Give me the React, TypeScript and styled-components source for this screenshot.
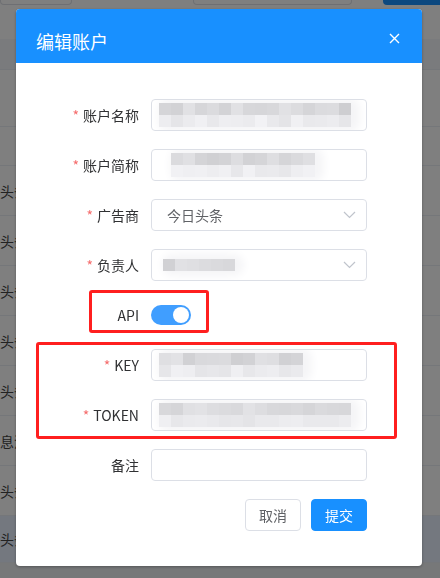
import React from "react";
import styled, { createGlobalStyle } from "styled-components";

const GlobalStyle = createGlobalStyle`
  html, body {
    margin: 0;
    padding: 0;
  }
  body {
    width: 440px;
    height: 578px;
    overflow: hidden;
    background: #fff;
    font-family: "Noto Sans CJK SC", "Microsoft YaHei", sans-serif;
  }
`;

/* ---------- page behind the dialog ---------- */

const Page = styled.div`
  width: 440px;
  height: 578px;
  overflow: hidden;
`;

const Toolbar = styled.div`
  display: flex;
  height: 5px;
`;

interface FilterBoxProps {
  $width: number;
  $gap: number;
}
const FilterBox = styled.div<FilterBoxProps>`
  width: ${(p) => p.$width}px;
  margin-left: ${(p) => p.$gap}px;
  height: 5px;
  box-sizing: border-box;
  border: 1px solid #dcdfe6;
  border-top: none;
  border-radius: 0 0 4px 4px;
`;

const ToolbarButton = styled.div`
  flex: 1;
  margin-left: 31px;
  height: 5px;
  background: #1890ff;
  border-radius: 0 0 0 4px;
`;

const Table = styled.div`
  margin-top: 34px;
  display: flex;
  flex-direction: column;
`;

interface TableRowProps {
  $height: number;
  $bg?: string;
}
const TableRow = styled.div<TableRowProps>`
  height: ${(p) => p.$height}px;
  background: ${(p) => p.$bg || "#fff"};
  border-bottom: 1px solid #ebeef5;
  box-sizing: border-box;
  display: flex;
  align-items: center;
  font-size: 14px;
  color: #444;
`;

/* ---------- dialog ---------- */

const Overlay = styled.div`
  position: fixed;
  inset: 0;
  background: rgba(0, 0, 0, 0.5);
  padding: 9px 0 0 16px;
  box-sizing: border-box;
`;

const Dialog = styled.div`
  position: relative;
  width: 406px;
  height: 557px;
  background: #fff;
  border-radius: 4px;
  overflow: hidden;
  box-shadow: 0 1px 3px rgba(0, 0, 0, 0.3);
`;

const DialogHeader = styled.div`
  display: flex;
  justify-content: space-between;
  align-items: flex-start;
  background: #1890ff;
  padding: 20px 22px 10px 20px;
`;

const DialogTitle = styled.span`
  font-size: 18px;
  line-height: 24px;
  color: #fff;
`;

const CloseButton = styled.button`
  margin-top: 4px;
  width: 11px;
  height: 11px;
  padding: 0;
  border: none;
  background: none;
  cursor: pointer;
  display: flex;
`;

const DialogBody = styled.div`
  padding: 36px 55px 0 20px;
`;

const FormItem = styled.div`
  display: flex;
  align-items: center;
  height: 32px;
  margin-bottom: 18px;
`;

const Label = styled.label`
  width: 115px;
  padding-right: 12px;
  box-sizing: border-box;
  text-align: right;
  font-size: 14px;
  line-height: 32px;
  color: #303133;
  white-space: nowrap;
`;

const Star = styled.span`
  color: #f56c6c;
  margin-right: 4px;
`;

interface FieldProps {
  $padLeft?: number;
}
const Field = styled.div<FieldProps>`
  width: 216px;
  height: 32px;
  box-sizing: border-box;
  border: 1px solid #dcdfe6;
  border-radius: 4px;
  display: flex;
  align-items: center;
  padding: 0 10px 0 ${(p) => p.$padLeft ?? 7}px;
  overflow: hidden;
`;

const SelectText = styled.span`
  flex: 1;
  font-size: 14px;
  color: #606266;
`;

const Spacer = styled.span`
  flex: 1;
`;

interface MosaicProps {
  $cols: number;
}
const Mosaic = styled.div<MosaicProps>`
  display: grid;
  grid-template-columns: repeat(${(p) => p.$cols}, 12px);
  grid-auto-rows: 12px;
  border-radius: 6px;
  box-shadow: 4px 0 8px 5px #f5f5f7;
  background: #f5f5f7;
`;

interface TileProps {
  $shade: number;
}
const Tile = styled.span<TileProps>`
  background: rgb(
    ${(p) => p.$shade},
    ${(p) => p.$shade},
    ${(p) => p.$shade + 3}
  );
`;

const Switch = styled.div`
  width: 40px;
  height: 20px;
  border-radius: 10px;
  background: #409eff;
  display: flex;
  align-items: center;
  justify-content: flex-end;
  padding: 0 2px;
  box-sizing: border-box;
`;

const Knob = styled.span`
  width: 16px;
  height: 16px;
  border-radius: 50%;
  background: #fff;
`;

const Footer = styled.div`
  display: flex;
  justify-content: flex-end;
  gap: 10px;
  width: 331px;
`;

interface ButtonProps {
  $primary?: boolean;
}
const Button = styled.button<ButtonProps>`
  width: 56px;
  height: 32px;
  border-radius: 4px;
  font-family: inherit;
  font-size: 14px;
  cursor: pointer;
  border: 1px solid ${(p) => (p.$primary ? "#1890ff" : "#dcdfe6")};
  background: ${(p) => (p.$primary ? "#1890ff" : "#fff")};
  color: ${(p) => (p.$primary ? "#fff" : "#606266")};
`;

interface MarkProps {
  $left: number;
  $top: number;
  $width: number;
  $height: number;
}
const Mark = styled.div<MarkProps>`
  position: absolute;
  left: ${(p) => p.$left}px;
  top: ${(p) => p.$top}px;
  width: ${(p) => p.$width}px;
  height: ${(p) => p.$height}px;
  box-sizing: border-box;
  border: 3px solid #ff1f1f;
  border-radius: 3px;
  pointer-events: none;
`;

/* ---------- helpers ---------- */

const shadesFor = (seed: number, count: number, lo: number, hi: number) => {
  let s = seed;
  const out: number[] = [];
  for (let i = 0; i < count; i++) {
    s = (s * 9301 + 49297) % 233280;
    out.push(Math.round(lo + (s / 233280) * (hi - lo)));
  }
  return out;
};

const Blur = ({ seed, cols, rows }: { seed: number; cols: number; rows: number }) => {
  const top = shadesFor(seed, cols, 206, 226);
  const bottom = rows > 1 ? shadesFor(seed + 7, cols, 228, 242) : [];
  return (
    <Mosaic $cols={cols}>
      {[...top, ...bottom].map((shade, i) => (
        <Tile key={i} $shade={shade} />
      ))}
    </Mosaic>
  );
};

const Chevron = () => (
  <svg width="13" height="8" viewBox="0 0 13 8" fill="none">
    <polyline points="1,1 6.5,6.5 12,1" stroke="#c0c4cc" strokeWidth="1.2" />
  </svg>
);

const rows = [
  { h: 31, bg: "#f5f7fa", text: "" },
  { h: 57, text: "" },
  { h: 39, text: "" },
  { h: 50, text: "头条" },
  { h: 50, text: "头条" },
  { h: 50, text: "头条" },
  { h: 50, text: "头条" },
  { h: 50, text: "头条" },
  { h: 50, text: "息流" },
  { h: 50, text: "头条" },
  { h: 47, bg: "#e8f1fe", text: "头条" },
  { h: 30, bg: "#eef0f3", text: "" },
];

const App = () => {
  return (
    <>
      <GlobalStyle />
      <Page>
        <Toolbar>
          <FilterBox $width={72} $gap={0} />
          <FilterBox $width={159} $gap={121} />
          <ToolbarButton />
        </Toolbar>
        <Table>
          {rows.map((row, i) => (
            <TableRow key={i} $height={row.h} $bg={row.bg}>
              {row.text}
            </TableRow>
          ))}
        </Table>
      </Page>

      <Overlay>
        <Dialog>
          <DialogHeader>
            <DialogTitle>编辑账户</DialogTitle>
            <CloseButton aria-label="关闭">
              <svg width="11" height="11" viewBox="0 0 11 11">
                <path d="M1 1L10 10M10 1L1 10" stroke="#fff" strokeWidth="1.4" />
              </svg>
            </CloseButton>
          </DialogHeader>

          <DialogBody>
            <FormItem>
              <Label>
                <Star>*</Star>账户名称
              </Label>
              <Field>
                <Blur seed={3} cols={16} rows={2} />
              </Field>
            </FormItem>
            <FormItem>
              <Label>
                <Star>*</Star>账户简称
              </Label>
              <Field $padLeft={19}>
                <Blur seed={11} cols={12} rows={2} />
              </Field>
            </FormItem>
            <FormItem>
              <Label>
                <Star>*</Star>广告商
              </Label>
              <Field $padLeft={15}>
                <SelectText>今日头条</SelectText>
                <Chevron />
              </Field>
            </FormItem>
            <FormItem>
              <Label>
                <Star>*</Star>负责人
              </Label>
              <Field $padLeft={11}>
                <Blur seed={23} cols={6} rows={1} />
                <Spacer />
                <Chevron />
              </Field>
            </FormItem>
            <FormItem>
              <Label>API</Label>
              <Switch>
                <Knob />
              </Switch>
            </FormItem>
            <FormItem>
              <Label>
                <Star>*</Star>KEY
              </Label>
              <Field>
                <Blur seed={41} cols={12} rows={2} />
              </Field>
            </FormItem>
            <FormItem>
              <Label>
                <Star>*</Star>TOKEN
              </Label>
              <Field>
                <Blur seed={57} cols={16} rows={2} />
              </Field>
            </FormItem>
            <FormItem>
              <Label>备注</Label>
              <Field />
            </FormItem>
            <Footer>
              <Button>取消</Button>
              <Button $primary>提交</Button>
            </Footer>
          </DialogBody>

          <Mark $left={73} $top={281} $width={120} $height={43} />
          <Mark $left={20} $top={333} $width={361} $height={97} />
        </Dialog>
      </Overlay>
    </>
  );
};

export default App;
